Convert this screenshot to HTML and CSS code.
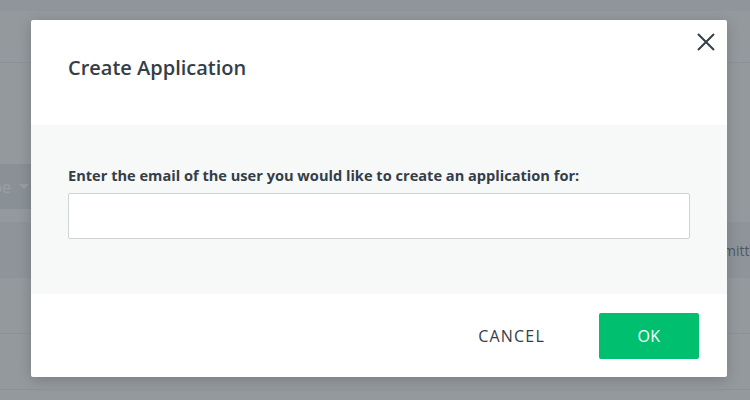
FILE: index.html
```html
<!DOCTYPE html>
<html lang="en">
<head>
    <meta charset="UTF-8">
    <meta name="viewport" content="width=device-width, initial-scale=1.0">
    <title>Applications</title>
    <link rel="stylesheet" href="styles.css">
</head>
<body>
    <div class="page">
        <div class="topbar"></div>
        <div class="subbar"></div>
        <div class="toolbar">
            <div class="filter">Type <span class="caret"></span></div>
        </div>
        <div class="table-head">
            <span class="col">Submitted</span>
        </div>
        <div class="table-row"></div>
        <div class="table-row"></div>
    </div>

    <div class="overlay">
        <div class="modal">
            <button class="close" type="button" aria-label="Close">
                <svg width="18" height="18" viewBox="0 0 18 18">
                    <path d="M1 1 L17 17 M17 1 L1 17" stroke="#333e48" stroke-width="2" fill="none"/>
                </svg>
            </button>
            <div class="modal-header">
                <h2>Create Application</h2>
            </div>
            <div class="modal-body">
                <label for="email">Enter the email of the user you would like to create an application for:</label>
                <input type="email" id="email" name="email">
            </div>
            <div class="modal-footer">
                <button type="button" class="btn-cancel">CANCEL</button>
                <button type="button" class="btn-ok">OK</button>
            </div>
        </div>
    </div>
</body>
</html>
```

FILE: styles.css
```css
body {
    margin: 0;
    font-family: "Open Sans", Arial, sans-serif;
    color: #333e48;
    background: #fff;
    overflow: hidden;
}
.page {
    height: 400px;
    background: #f4f5f5;
}
.topbar {
    height: 11px;
    background: #ebecec;
}
.subbar {
    height: 51px;
    border-bottom: 1px solid #e4e6e8;
}
.toolbar {
    padding-top: 102px;
    box-sizing: border-box;
    height: 159px;
}
.filter {
    width: 32px;
    height: 45px;
    margin-top: -1px;
    background: #dfe2e4;
    display: flex;
    align-items: center;
    justify-content: flex-end;
    overflow: hidden;
    white-space: nowrap;
    font-size: 16px;
    color: #fff;
}
.caret {
    display: inline-block;
    border-left: 5px solid transparent;
    border-right: 5px solid transparent;
    border-top: 5px solid #fff;
    margin-left: 8px;
    margin-right: 3px;
}
.table-head {
    height: 56px;
    background: #e9ebec;
    display: flex;
    justify-content: flex-end;
    align-items: center;
    overflow: hidden;
}
.table-head .col {
    font-size: 14px;
    color: #6b737a;
    margin-right: -16px;
}
.table-row {
    height: 55px;
    border-bottom: 1px solid #e4e6e8;
}
.overlay {
    position: absolute;
    top: 0;
    left: 0;
    width: 750px;
    height: 400px;
    background: rgba(51, 62, 72, 0.5);
}
.modal {
    position: absolute;
    top: 20px;
    left: 31px;
    width: 696px;
    background: #fff;
    border-radius: 2px;
    box-shadow: 0 3px 14px rgba(0, 0, 0, 0.18);
}
.close {
    position: absolute;
    top: 13px;
    right: 12px;
    padding: 0;
    border: none;
    background: none;
    width: 18px;
    height: 18px;
    cursor: pointer;
}
.modal-header {
    height: 105px;
    padding: 0 37px;
    box-sizing: border-box;
}
.modal-header h2 {
    margin: 0;
    padding-top: 36px;
    font-size: 20px;
    font-weight: 600;
    line-height: 24px;
}
.modal-body {
    background: #f7f8f8;
    padding: 40px 37px 56px;
    height: 169px;
    box-sizing: border-box;
}
.modal-body label {
    display: block;
    font-size: 14.6px;
    font-weight: 700;
    line-height: 20px;
    margin-bottom: 8px;
}
.modal-body input {
    display: block;
    width: 100%;
    height: 46px;
    box-sizing: border-box;
    border: 1px solid #d0d4d7;
    border-radius: 2px;
    background: #fff;
    font-size: 14px;
    padding: 0 12px;
}
.modal-footer {
    height: 83px;
    display: flex;
    justify-content: flex-end;
    align-items: center;
    padding-right: 28px;
    gap: 30px;
}
.btn-cancel {
    border: none;
    background: none;
    font-family: inherit;
    font-size: 16px;
    letter-spacing: 1.2px;
    color: #333e48;
    padding: 0 24px;
    height: 46px;
    cursor: pointer;
}
.btn-ok {
    width: 100px;
    height: 46px;
    border: none;
    border-radius: 2px;
    background: #00bf6f;
    color: #fff;
    font-family: inherit;
    font-size: 16px;
    font-weight: 400;
    letter-spacing: 0.5px;
    cursor: pointer;
}
```
